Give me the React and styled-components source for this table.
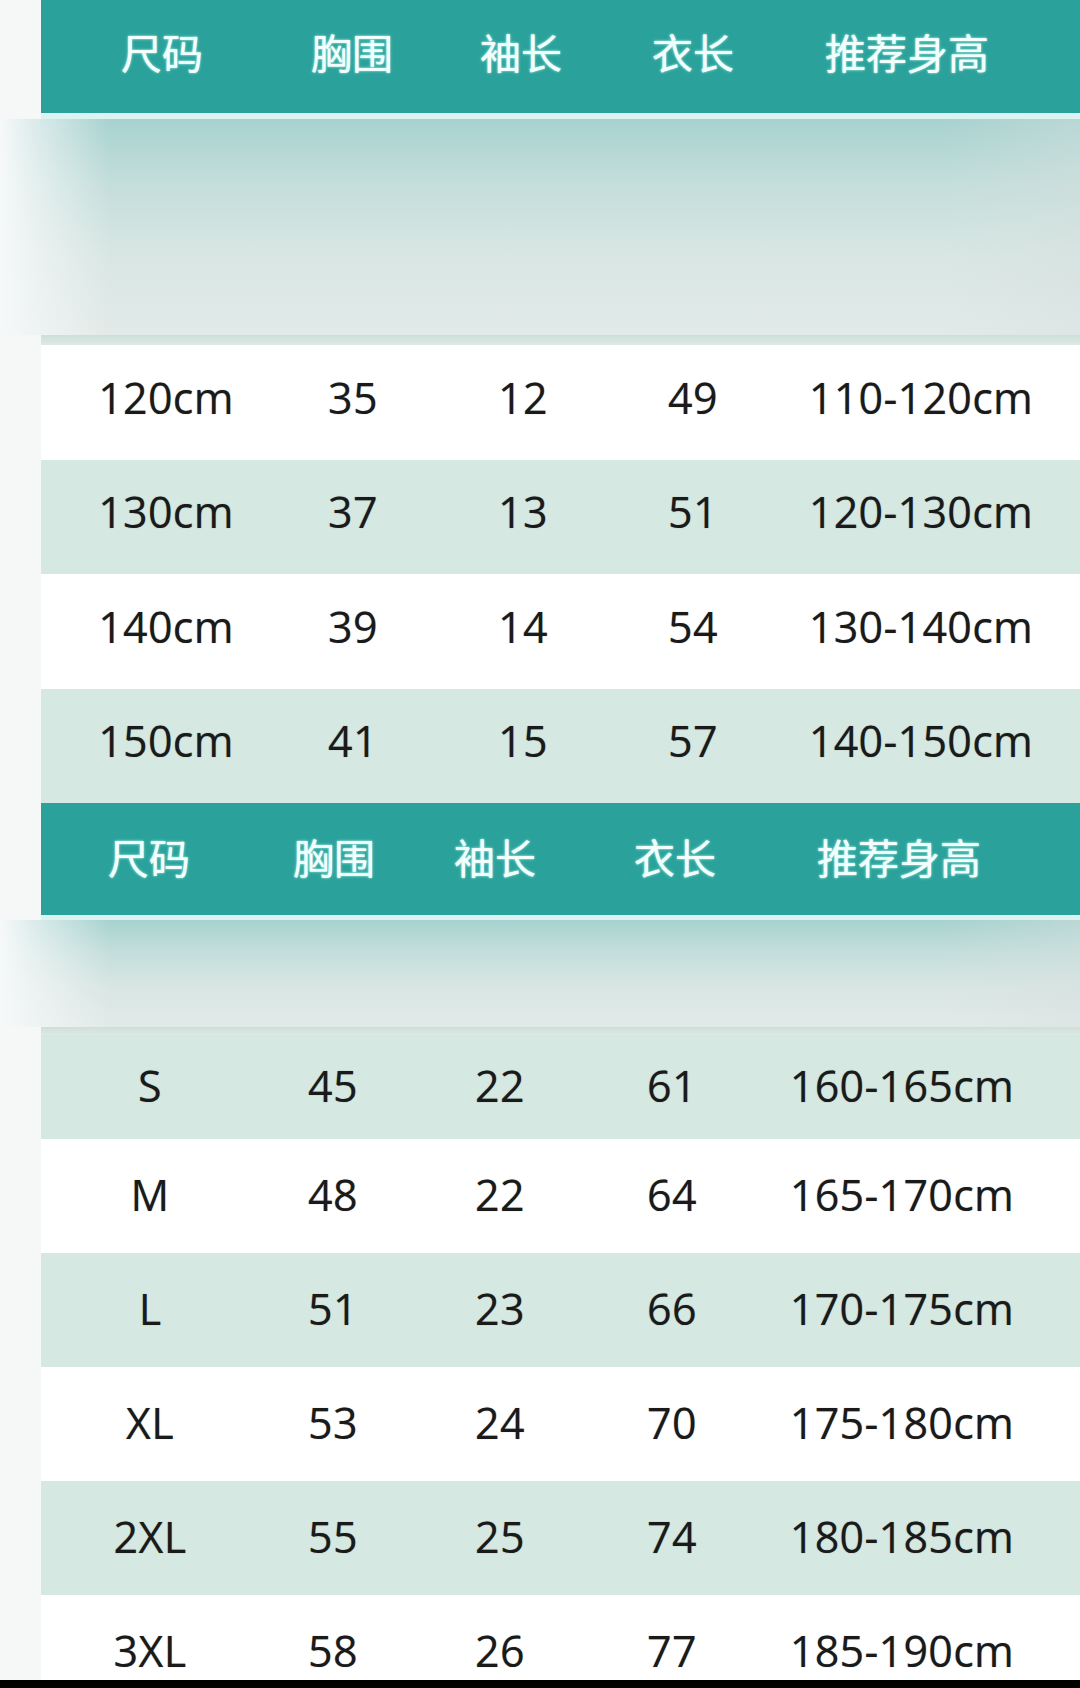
import React from "react";
import styled, { createGlobalStyle } from "styled-components";

const Global = createGlobalStyle`
  html, body { margin: 0; padding: 0; background: #f6f8f8; }
  body { width: 1080px; height: 1688px; overflow: hidden; }
  #root { width: 1080px; }
`;

const Page = styled.div`
  width: 1080px;
  height: 1688px;
  display: flex;
  flex-direction: column;
  background: #f6f8f8;
`;

const Viewport = styled.div`
  height: 1680px;
  overflow: hidden;
  display: flex;
  flex-direction: column;
`;

const BottomBar = styled.div`
  height: 8px;
  background: #000;
`;

const Header = styled.div`
  box-sizing: border-box;
  margin-left: 41px;
  height: ${(p) => p.$h + p.$line}px;
  background: #2aa29b;
  border-bottom: ${(p) => p.$line}px solid #dcf3f1;
  display: grid;
  grid-template-columns: ${(p) => p.$cols};
  padding: 0 0 ${(p) => p.$lift}px 20px;
  align-items: center;
  flex-shrink: 0;
`;

const HeadCell = styled.div`
  text-align: center;
  white-space: nowrap;
  font-family: "Noto Sans CJK SC", "Noto Sans", sans-serif;
  font-size: 41px;
  font-weight: 400;
  color: #f3fffd;
  text-shadow: 0 0 3px rgba(190, 255, 248, 0.8), 0 0 1px rgba(255, 255, 255, 0.9);
  line-height: 1;
`;

const Band = styled.div`
  height: ${(p) => p.$h}px;
  flex-shrink: 0;
  background:
    linear-gradient(to right, rgba(246, 249, 249, 1) 0px, rgba(246, 249, 249, 0.6) 40px, rgba(246, 249, 249, 0) 110px),
    linear-gradient(to left, rgba(214, 224, 222, 0.4) 0px, rgba(214, 224, 222, 0) 140px),
    linear-gradient(to bottom, #a7d2cf 0%, #c4dedb 30%, #d8e6e3 62%, #e2eae8 100%);
`;

const Strip = styled.div`
  margin-left: 41px;
  height: ${(p) => p.$h}px;
  flex-shrink: 0;
  background: linear-gradient(to bottom, #cddfda, #dde9e5);
`;

const Row = styled.div`
  box-sizing: border-box;
  margin-left: 41px;
  height: ${(p) => p.$h}px;
  flex-shrink: 0;
  background: ${(p) => (p.$alt ? "#d5e8e2" : "#ffffff")};
  display: grid;
  grid-template-columns: ${(p) => p.$cols};
  padding: 0 0 ${(p) => p.$lift}px 20px;
  align-items: center;
`;

const Cell = styled.div`
  text-align: center;
  white-space: nowrap;
  font-family: "Open Sans", "Noto Sans", sans-serif;
  font-size: 43px;
  font-weight: 500;
  color: #1a1a1a;
  line-height: 1;
  letter-spacing: 0.3px;
  text-shadow: 0 0 1px rgba(0, 0, 0, 0.45);
`;

const heads = ["尺码", "胸围", "袖长", "衣长", "推荐身高"];

const tables = [
  {
    headH: 113,
    line: 6,
    lift: 10,
    rowLift: 10,
    band: 216,
    strip: 10,
    headCols: "202px 178px 160px 184px 244px",
    dataCols: "210px 164px 176px 164px 292px",
    firstAlt: false,
    rows: [
      { h: 114.5, v: ["120cm", "35", "12", "49", "110-120cm"] },
      { h: 114.5, v: ["130cm", "37", "13", "51", "120-130cm"] },
      { h: 114.5, v: ["140cm", "39", "14", "54", "130-140cm"] },
      { h: 114.5, v: ["150cm", "41", "15", "57", "140-150cm"] },
    ],
  },
  {
    headH: 112,
    line: 5,
    lift: 6,
    rowLift: 3,
    band: 107,
    strip: 8,
    headCols: "176px 194px 128px 232px 216px",
    dataCols: "178px 188px 146px 198px 262px",
    firstAlt: true,
    rows: [
      { h: 104, v: ["S", "45", "22", "61", "160-165cm"] },
      { h: 114, v: ["M", "48", "22", "64", "165-170cm"] },
      { h: 114, v: ["L", "51", "23", "66", "170-175cm"] },
      { h: 114, v: ["XL", "53", "24", "70", "175-180cm"] },
      { h: 114, v: ["2XL", "55", "25", "74", "180-185cm"] },
      { h: 114, v: ["3XL", "58", "26", "77", "185-190cm"] },
    ],
  },
];

export default function App() {
  return (
    <Page>
      <Global />
      <Viewport>
        {tables.map((t, ti) => (
          <React.Fragment key={ti}>
            <Header $h={t.headH} $line={t.line} $lift={t.lift} $cols={t.headCols}>
              {heads.map((h) => (
                <HeadCell key={h}>{h}</HeadCell>
              ))}
            </Header>
            <Band $h={t.band} />
            <Strip $h={t.strip} />
            {t.rows.map((r, ri) => (
              <Row
                key={ri}
                $h={r.h}
                $lift={t.rowLift}
                $cols={t.dataCols}
                $alt={ri % 2 === 0 ? t.firstAlt : !t.firstAlt}
              >
                {r.v.map((c, ci) => (
                  <Cell key={ci}>{c}</Cell>
                ))}
              </Row>
            ))}
          </React.Fragment>
        ))}
      </Viewport>
      <BottomBar />
    </Page>
  );
}
